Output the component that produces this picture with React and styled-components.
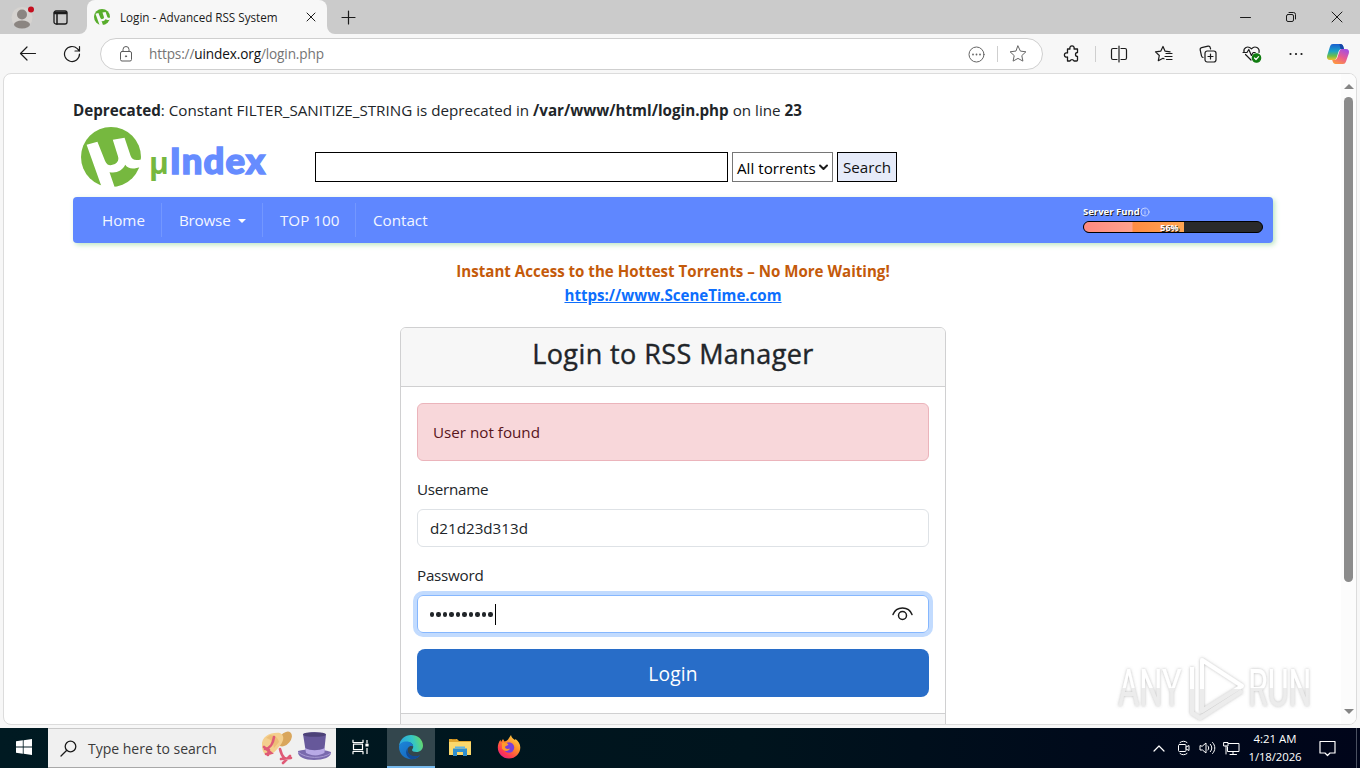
import React from 'react';
import styled, { createGlobalStyle, css } from 'styled-components';

const GlobalStyle = createGlobalStyle`
  * { box-sizing: border-box; }
  body {
    margin: 0;
    overflow: hidden;
    font-family: "Open Sans", "Noto Sans", sans-serif;
    font-size: 15.2px;
    line-height: 24px;
    color: #212529;
  }
`;

const center = css`
  display: flex;
  align-items: center;
  justify-content: center;
`;

const Screen = styled.div`
  width: 1360px;
  height: 768px;
  display: flex;
  flex-direction: column;
  background: #f7f7f7;
  overflow: hidden;
`;

const Text = styled.span`
  white-space: pre;
  letter-spacing: ${p => p.$track || 0}px;
`;

/* window chrome */

const TabBar = styled.div`
  height: 34px;
  flex: none;
  display: flex;
  background: #f7f7f7;
`;

const TabBarStart = styled.div`
  width: 87px;
  display: flex;
  align-items: center;
  padding-left: 11px;
  gap: 19px;
  background: #cbcbcb;
  border-bottom-right-radius: 8px;
`;

const TabHolder = styled.div`
  background: #cbcbcb;
  width: 240px;
`;

const Tab = styled.div`
  height: 34px;
  display: flex;
  align-items: center;
  padding: 0 11px 0 7px;
  background: #f7f7f7;
  border-radius: 8px 8px 0 0;
  font-size: 11.7px;
  color: #1b1b1b;

  ${Text} { margin-left: 10px; flex: 1; }
`;

const TabBarEnd = styled.div`
  flex: 1;
  display: flex;
  justify-content: space-between;
  padding-left: 5px;
  background: #cbcbcb;
  border-bottom-left-radius: 8px;
`;

const WindowButtons = styled.div`
  display: flex;
`;

const Slot = styled.div`
  ${center}
  width: ${p => p.$w || 44}px;
  flex: none;
`;

const Toolbar = styled.div`
  height: 39px;
  flex: none;
  display: flex;
  align-items: center;
  padding: 1px 0 0 6px;
`;

const Address = styled.div`
  width: 943px;
  height: 32px;
  margin: 0 6px;
  display: flex;
  align-items: center;
  background: #fff;
  border: 1px solid #cfcfcf;
  border-radius: 16px;
  padding: 0 4px 0 16px;
  font-size: 13.6px;
  color: #757575;

  ${Text} { margin-left: 14px; flex: 1; }
  b { font-weight: 400; color: #111; }
`;

const Rule = styled.div`
  width: 1px;
  height: 16px;
  background: #cfcfcf;
`;

/* page */

const Page = styled.div`
  flex: 1;
  min-height: 0;
  margin: 0 3px 3px 3px;
  display: flex;
  background: #fff;
  border: 1px solid #dcdcdc;
  border-radius: 8px;
  overflow: hidden;
`;

const Content = styled.div`
  width: 1337px;
  padding: 24px 0 0 69px;
  overflow: hidden;
`;

const Container = styled.div`
  width: 1200px;
`;

const Notice = styled.div`
  height: 24px;
`;

const Header = styled.div`
  height: 75px;
  display: flex;
  align-items: flex-start;
  padding: 5px 0 0 8px;
`;

const Brand = styled.div`
  width: 234px;
  display: flex;
`;

const BrandName = styled.div`
  display: flex;
  align-items: baseline;
  margin: 10px 0 0 8px;
  height: 46px;
  line-height: 46px;
  font-family: Lato, sans-serif;
  font-weight: 900;
  font-size: 36.5px;
  letter-spacing: 1.1px;
  color: #668cff;
  -webkit-text-stroke: 1.5px #668cff;

  i {
    font: 700 30px/46px "Open Sans", sans-serif;
    letter-spacing: 0;
    color: #76b83f;
    -webkit-text-stroke: 0;
    margin-right: 1px;
  }
`;

const SearchForm = styled.div`
  display: flex;
  gap: 4px;
  padding-top: 25px;
  line-height: 28px;
`;

const SearchInput = styled.div`
  width: 413px;
  height: 30px;
  border: 1px solid #000;
`;

const Select = styled.div`
  width: 101px;
  height: 30px;
  border: 1px solid #767676;
  display: flex;
  align-items: center;
  justify-content: space-between;
  padding: 1px 3px 0 4px;
  color: #000;
`;

const SearchButton = styled.div`
  ${center}
  width: 60px;
  height: 30px;
  border: 1px solid #000;
  background: #e6ebf9;
  color: #111;
`;

const Nav = styled.div`
  height: 46px;
  display: flex;
  align-items: center;
  background: #5f87ff;
  border-radius: 4px;
  box-shadow: 2px 2px 5px rgba(110, 200, 120, 0.45);
  padding: 0 10px 0 12px;
`;

const NavItem = styled.div`
  height: 34px;
  display: flex;
  align-items: center;
  width: ${p => p.$w}px;
  padding-left: 17px;
  color: #f3f6ff;
  border-right: ${p => (p.$last ? 0 : '1px solid #7397ff')};
`;

const Caret = styled.span`
  margin-left: 7px;
  margin-top: 2px;
  border: 4px solid transparent;
  border-top-color: #fff;
  border-bottom: 0;
`;

const Fund = styled.div`
  margin-left: auto;
  width: 180px;
  height: 30px;
  color: #fff;
  font-size: 9.5px;
  font-weight: 700;
  line-height: 12px;
  text-shadow: 1px 1px 0 #222;
`;

const FundTitle = styled.div`
  display: flex;
  align-items: center;
  height: 13px;
  margin-bottom: 3px;
`;

const FundTrack = styled.div`
  height: 12px;
  display: flex;
  background: #2a2a2a;
  border: 1px solid #000;
  border-radius: 6px;
  overflow: hidden;
`;

const FundBar = styled.div`
  width: 56%;
  background: linear-gradient(90deg, #ff8a80 0, #ffa28c 48%, #ff8c42 49%, #ffa552 100%);
  text-align: right;
  line-height: 11px;
  padding-right: 5px;
  font-size: 9px;
`;

const Promo = styled.div`
  margin-top: 16px;
  display: flex;
  flex-direction: column;
  align-items: center;
  font-weight: 700;
  font-size: 15.1px;
  color: #c45a0a;

  a { color: #0d6efd; text-decoration: underline; }
`;

const Card = styled.div`
  width: 546px;
  height: 440px;
  margin: 20px 0 0 327px;
  border: 1px solid #d0d0d1;
  border-radius: 6px;
  overflow: hidden;
`;

const CardHeader = styled.div`
  height: 59px;
  display: flex;
  justify-content: center;
  padding-top: 9px;
  background: #f7f7f7;
  border-bottom: 1px solid #d0d0d1;
  font-size: 27px;
  line-height: 34px;
  -webkit-text-stroke: 0.4px #212529;
`;

const CardBody = styled.div`
  display: flex;
  flex-direction: column;
  padding: 16px;
`;

const CardFooter = styled.div`
  height: 60px;
  background: #f7f7f7;
  border-top: 1px solid #d0d0d1;
`;

const Alert = styled.div`
  height: 58px;
  display: flex;
  align-items: center;
  padding-left: 15px;
  background: #f8d7da;
  border: 1px solid #ebb4bb;
  border-radius: 6px;
  color: #58151c;
`;

const Label = styled.div`
  height: 24px;
  margin: 16px 0 8px;
  letter-spacing: -0.25px;

  ${Text} { letter-spacing: inherit; }
`;

const Field = styled.div`
  height: 38px;
  display: flex;
  align-items: center;
  padding: 0 15px 0 12px;
  border: 1px solid ${p => (p.$focus ? '#86b7fe' : '#dee2e6')};
  border-radius: 6px;
  box-shadow: ${p => (p.$focus ? '0 0 0 4px #c2dbfe' : 'none')};
`;

const Dots = styled.div`
  display: flex;
  gap: 2.1px;
  padding-top: 1px;

  i {
    width: 4.4px;
    height: 4.4px;
    border-radius: 50%;
    background: #212529;
  }
`;

const Cursor = styled.div`
  width: 1px;
  height: 21px;
  margin: 0 auto 0 2px;
  background: #000;
`;

const Submit = styled.div`
  ${center}
  height: 48px;
  margin-top: 16px;
  padding-top: 1px;
  background: #286dc8;
  border-radius: 8px;
  color: #fff;
  font-size: 19.2px;
`;

const Scroll = styled.div`
  flex: 1;
  display: flex;
  flex-direction: column;
  align-items: center;
  padding: 10px 0 10px;
  background: #fcfcfc;
`;

const Thumb = styled.div`
  width: 9px;
  height: 485px;
  margin: 8px 0 auto;
  border-radius: 5px;
  background: #8b8b8b;
`;

const Arrow = styled.div`
  border: 5px solid transparent;
  ${p => (p.$up ? 'border-bottom-color' : 'border-top-color')}: #858585;
  ${p => (p.$up ? 'border-top' : 'border-bottom')}: 0;
`;

const Watermark = styled.div`
  position: absolute;
  left: 1114px;
  top: 655px;
  width: 204px;
  height: 68px;
`;

/* taskbar */

const Taskbar = styled.div`
  height: 40px;
  flex: none;
  display: flex;
  background: linear-gradient(90deg, #001a22, #00141d 55%, #000a1b 80%, #00051a);
  color: #fff;
`;

const SearchBox = styled.div`
  width: 288px;
  display: flex;
  align-items: center;
  padding: 1px 4px 0 12px;
  background: #f0f0f0;
  border-top: 1px solid #c9c9c9;
  border-bottom: 1px solid #a8a8a8;
  color: #3b3b3b;
  font-size: 14px;

  ${Text} { margin-left: 11px; flex: 1; }
`;

const TaskButton = styled.div`
  ${center}
  width: ${p => p.$w || 49}px;
  background: ${p => (p.$active ? '#33464d' : 'none')};
  border-bottom: 2px solid ${p => (p.$active ? '#76b9ed' : 'transparent')};
`;

const Tray = styled.div`
  margin-left: auto;
  display: flex;
  align-items: center;
`;

const Clock = styled.div`
  width: 64px;
  display: flex;
  flex-direction: column;
  align-items: center;
  font-size: 11.4px;
  line-height: 18px;
`;

const ShowDesktop = styled.div`
  width: 4px;
  height: 40px;
  margin-left: 8px;
  border-left: 1px solid #4a5060;
`;

const Icon = ({ w = 20, h, box, sw = 1, color = '#1b1b1b', children }) => (
  <svg
    width={w}
    height={h || w}
    viewBox={box || `0 0 ${w} ${h || w}`}
    fill="none"
    stroke={color}
    strokeWidth={sw}
    strokeLinecap="round"
    strokeLinejoin="round"
  >
    {children}
  </svg>
);

const MuLogo = ({ size, color = '#76b83f', back = '#fff' }) => (
  <svg width={size} height={size} viewBox="0 0 61 61">
    <circle cx="30.5" cy="30.5" r="30.5" fill={color} />
    <path
      fill={back}
      d="M5.700 18 16.700 15 24.500 34.500C26 38 28.500 39.500 32 38.500 37 37 39 34 37.500 29.500L32.300 13 44.300 11 50.500 29.500C52 33.500 55 34.500 61.500 33V40C54 43.500 48 43 45 38.500 42 44.500 36 47.500 29 46L34.500 62 21 61Z"
    />
  </svg>
);

const Copilot = () => (
  <svg width="24" height="24" viewBox="0 0 24 24">
    <defs>
      <linearGradient id="cpA" x1="0" y1="0" x2="0" y2="1">
        <stop offset="0" stopColor="#1a5fd0" />
        <stop offset="0.45" stopColor="#1aa3c8" />
        <stop offset="0.75" stopColor="#6cbf4a" />
        <stop offset="1" stopColor="#f2c230" />
      </linearGradient>
      <linearGradient id="cpB" x1="0.7" y1="0" x2="0.2" y2="1">
        <stop offset="0" stopColor="#a64fe0" />
        <stop offset="0.5" stopColor="#ea5c8f" />
        <stop offset="1" stopColor="#ff9a3c" />
      </linearGradient>
    </defs>
    <path d="M7 2h7.500c1.500 0 2.300 1 2.800 2.500L18 7h-2c-2 0-3 1-3.600 3l-1.700 5.500C10 17.500 9 18 7.500 18H4c-2.500 0-3.600-2-2.800-4.500L4 4.500C4.600 2.800 5.500 2 7 2z" fill="url(#cpA)" />
    <path d="M17 22H9.500c-1.500 0-2.300-1-2.800-2.500L6.200 18H8c2 0 3-1 3.600-3l1.700-5.500C14 7.500 15 7 16.500 7H20c2.500 0 3.600 2 2.800 4.500L20 19.500c-.6 1.700-1.500 2.500-3 2.500z" fill="url(#cpB)" />
    <path d="M13.300 2h1.200c1.500 0 2.300 1 2.800 2.500L18 7h-3.500z" fill="#1747a8" />
  </svg>
);

const Edge = () => (
  <svg width="26" height="26" viewBox="0 0 26 26">
    <defs>
      <linearGradient id="edA" x1="0" y1="0.3" x2="1" y2="0.1">
        <stop offset="0" stopColor="#2aa5e0" />
        <stop offset="0.55" stopColor="#35c6c4" />
        <stop offset="1" stopColor="#6fdc5a" />
      </linearGradient>
      <linearGradient id="edB" x1="0" y1="0" x2="1" y2="1">
        <stop offset="0" stopColor="#1c86d8" />
        <stop offset="1" stopColor="#1560b8" />
      </linearGradient>
    </defs>
    <path d="M1 12C1.600 5.500 7 1 13 1c7 0 12 4.700 12 10.500 0 4-2.800 6.500-6.500 6.500-3 0-4.500-1-4.500-2 0-.8 1.200-1.200 1.200-3.200C15.200 10 12.500 8 9 8c-4 0-7 2-8 4z" fill="url(#edA)" />
    <path d="M1 13C1.200 9.500 4.700 7.500 8.500 7.500c4 0 6.500 2.300 6.700 5-4-1.500-6 1.500-5.500 4.500.6 4.500 6.300 7.500 12.300 4.200C20 24 16.800 25.300 13.500 25.300 6.500 25.300 1 20 1 13z" fill="url(#edB)" />
    <path d="M9.700 14c-1.500 6 5 10.500 12.500 7-2 2.800-5 4.300-8.700 4.300C8.500 23.500 6.500 18 9.700 14z" fill="#124a94" />
  </svg>
);

const Explorer = () => (
  <svg width="22" height="20" viewBox="0 0 22 20">
    <path d="M0 2h8l2 2h12v14H0z" fill="#e0a52e" />
    <path d="M0 5h22v13H0z" fill="#fbd86c" />
    <path d="M3 2.500h4" stroke="#c98a1a" />
    <path d="M4 11.500h14V19h-4v-4H8v4H4z" fill="#2f8fcf" />
    <path d="M6 9.500h10v2H6z" fill="#5fb4e6" />
  </svg>
);

const Firefox = () => (
  <svg width="24" height="24" viewBox="0 0 24 24">
    <defs>
      <linearGradient id="ffA" x1="0.9" y1="0" x2="0.2" y2="1">
        <stop offset="0" stopColor="#ffe04a" />
        <stop offset="0.45" stopColor="#ff8a2a" />
        <stop offset="0.8" stopColor="#ff3750" />
        <stop offset="1" stopColor="#e0208a" />
      </linearGradient>
    </defs>
    <path d="M12 23.500C5.500 23.500.8 18.500.8 12.500c0-3 .9-5.500 2.700-7.800L4 7l2-3 1.500 2.500C10 6 11 5 12 3l2-3c.5 2.500 2 3.500 4 5l.5-1C21.500 6 23.300 9 23.300 12.500c0 6-4.800 11-11.300 11z" fill="url(#ffA)" />
    <circle cx="12" cy="12.500" r="5.200" fill="#7a3fd8" />
    <path d="M5 8c3-1 5 0 6.500 1.500-1 1.500-3 1-3.500 2.500 0 2 3 2.500 5 1.500-1 3-6 3.500-8 0z" fill="#ff9a2a" />
  </svg>
);

const Hats = () => (
  <svg width="72" height="36" viewBox="0 0 72 36">
    <ellipse cx="25" cy="8" rx="8.500" ry="5.500" transform="rotate(-50 25 8)" fill="#d9a65c" />
    <path d="M2 15C1 5 11 1 20 2c6 3 3 10-2 15-4 5-9 9-12 7-3-2-4-6-4-9z" fill="#f4cf8e" />
    <path d="M10 4c5 0 8 3 9 7l-5 6C13 11 11 8 6 7z" fill="#edbd76" />
    <path d="M14 6c-1 7-3 11-9 12M4 16l7 6-5 1M9 19l-1 5M20 18c1 5 2 7 5 10M21 28l10-1M23 32l7-7" stroke="#df5a76" strokeWidth="2.600" fill="none" strokeLinecap="round" />
    <path d="M38 20c9-2 24-2 33 1 1 5-8 8-17 8-9 0-17-3-16-9z" fill="#7969ad" />
    <path d="M43 3c7-2.500 17-2.500 23 .5L64 22c-5 3-13 3-18 0z" fill="#66589a" />
    <ellipse cx="54.500" cy="3.500" rx="11.500" ry="2.300" fill="#4d4278" />
    <path d="M45 17c6 3 13 3 20 0l-.6 5c-6 3.500-13 3-18.400 0z" fill="#b8a9e6" />
    <path d="M38 21c8 7 25 7 33 1" stroke="#a99bd4" fill="none" />
  </svg>
);

const Favourite = ({ color, lines }) => (
  <Icon w={lines ? 20 : 18} box={lines ? '0 0 20 20' : '1 1 18 18'} color={color} sw={lines ? 1.2 : 1}>
    {lines
      ? <path d="M9 2.500l2.100 4.700 5 .6M9 2.500L6.700 7.200l-5.200.7 3.800 3.600-1 5.200L9 14.300l1 .5M12 9.500h6M11 12.500H18M12.500 15.500H18" />
      : <path d="M10 2l2.400 5.100 5.500.7-4.100 3.800 1.100 5.500L10 14.400l-4.900 2.700 1.100-5.500L2.100 7.800l5.500-.7z" />}
  </Icon>
);

const Chrome = () => (
  <>
    <TabBar>
      <TabBarStart>
        <svg width="23" height="24" viewBox="0 0 23 24">
          <circle cx="11" cy="12.500" r="10.500" fill="#d6d3d0" />
          <circle cx="11" cy="9.500" r="5" fill="#8b8581" />
          <ellipse cx="11" cy="19.500" rx="8" ry="4" fill="#8b8581" />
          <circle cx="20" cy="4.500" r="3" fill="#c50f1f" />
        </svg>
        <Icon w={15} sw={1.3}>
          <rect x="1" y="1" width="13" height="13" rx="2" />
          <path d="M1.500 2.500h12M1.500 3.500h12M4 4v10" strokeWidth="1.500" />
        </Icon>
      </TabBarStart>
      <TabHolder>
        <Tab>
          <MuLogo size={16} color="#58ad2c" back="#f7f7f7" />
          <Text $track={-0.03}>Login - Advanced RSS System</Text>
          <Icon w={10}><path d="M1 1l8 8M9 1L1 9" /></Icon>
        </Tab>
      </TabHolder>
      <TabBarEnd>
        <Slot $w={33}><Icon w={15} sw={1.2}><path d="M7.500 1v13M1 7.500h13" /></Icon></Slot>
        <WindowButtons>
          <Slot $w={46}><Icon w={11} h={11}><path d="M.5 5.500h10" /></Icon></Slot>
          <Slot $w={46}>
            <Icon w={12}>
              <rect x="1.500" y="3.500" width="7" height="7" rx="1.500" />
              <path d="M4 1.500h4.500a2 2 0 0 1 2 2V8" />
            </Icon>
          </Slot>
          <Slot $w={46}><Icon w={12}><path d="M1 1l10 10M11 1L1 11" /></Icon></Slot>
        </WindowButtons>
      </TabBarEnd>
    </TabBar>
    <Toolbar>
      <Slot><Icon w={18} sw={1.2}><path d="M16.500 8.500H1.500M8 2L1.500 8.500 8 15" /></Icon></Slot>
      <Slot>
        <Icon w={18} sw={1.2}><path d="M16.500 9a7.500 7.500 0 1 1-2.200-5.300L16.500 6M16.500 1.500V6H12" /></Icon>
      </Slot>
      <Address>
        <Icon w={18} color="#5c5c5c">
          <rect x="3.500" y="6.500" width="11" height="9.500" rx="1.500" />
          <path d="M6 6.500V4.500a3 3 0 0 1 6 0v2" />
          <circle cx="9" cy="11.300" r=".6" fill="#5c5c5c" />
        </Icon>
        <Text $track={-0.13}>https://<b>uindex.org</b>/login.php</Text>
        <Slot $w={41}>
          <Icon w={17} color="#666">
            <circle cx="8.500" cy="8.500" r="7.500" />
            <path d="M5 8.500h.01M8.500 8.500h.01M12 8.500h.01" strokeWidth="1.800" />
          </Icon>
        </Slot>
        <Rule />
        <Slot $w={40}><Favourite color="#666" /></Slot>
      </Address>
      <Slot>
        <Icon w={18} sw={1.3} box="-1 0 18 18">
          <path d="M4.500 4H7a2.200 2.200 0 1 1 4 0h3.500v3.500a2 2 0 1 0 0 4V15a1 1 0 0 1-1 1H11a2.200 2.200 0 0 0-4 0H4.500V12a2.200 2.200 0 1 1 0-4z" />
        </Icon>
      </Slot>
      <Slot $w={4}><Rule /></Slot>
      <Slot>
        <Icon w={18} sw={1.2}>
          <path d="M9 1v16M7 3.500H3a1.500 1.500 0 0 0-1.500 1.500v8A1.500 1.500 0 0 0 3 14.500h4M11 3.500h4A1.500 1.500 0 0 1 16.500 5v8a1.500 1.500 0 0 1-1.500 1.500h-4" />
        </Icon>
      </Slot>
      <Slot $w={45}><Favourite lines /></Slot>
      <Slot>
        <Icon w={18} sw={1.2}>
          <rect x="6" y="6" width="11" height="11" rx="2.200" />
          <path d="M11.500 9v5M9 11.500h5M4 12.500a2 2 0 0 1-1.500-1.700L1.200 5a2 2 0 0 1 1.500-2.300L9 1.200A2 2 0 0 1 11.300 2.800L11.600 4" />
        </Icon>
      </Slot>
      <Slot>
        <Icon w={20} sw={1.2}>
          <path d="M9 16L3.500 10.500M2 8c-.8-4 3.500-7 7.500-3.200C13 1 18 4 17 8.500M1 8.500h4l1.800-3 2.600 6 1.800-3h2" />
          <circle cx="14.500" cy="14" r="4.200" fill="#107c10" stroke="#107c10" />
          <path d="M12.500 14l1.500 1.500 2.600-2.800" stroke="#fff" />
        </Icon>
      </Slot>
      <Slot>
        <Icon w={16} h={4} sw={2.2}><path d="M2.500 2h.01M8 2h.01M13.500 2h.01" /></Icon>
      </Slot>
      <Slot $w={40}><Copilot /></Slot>
    </Toolbar>
  </>
);

const LoginCard = () => (
  <Card>
    <CardHeader><Text $track={0.42}>Login to RSS Manager</Text></CardHeader>
    <CardBody>
      <Alert><Text>User not found</Text></Alert>
      <Label><Text>Username</Text></Label>
      <Field><Text>d21d23d313d</Text></Field>
      <Label><Text>Password</Text></Label>
      <Field $focus>
        <Dots>{Array.from({ length: 10 }, (_, i) => <i key={i} />)}</Dots>
        <Cursor />
        <Icon w={22} h={16} sw={1.5}>
          <path d="M2 8.500C3.500 4.500 7 2 11.500 2s8 2.500 9.500 6.500" />
          <circle cx="11.500" cy="9.500" r="4" />
        </Icon>
      </Field>
      <Submit><Text $track={0.15}>Login</Text></Submit>
    </CardBody>
    <CardFooter />
  </Card>
);

const AnyRun = () => (
  <Watermark>
    <svg width="204" height="68" viewBox="-2 0 204 68">
      <defs>
        <filter id="soft" x="-10%" y="-10%" width="120%" height="120%">
          <feDropShadow dx="0" dy="0" stdDeviation="1.6" floodColor="#777" floodOpacity="0.5" />
        </filter>
        <linearGradient id="wm" x1="0" y1="0" x2="0" y2="1">
          <stop offset="0.5" stopColor="#fff" />
          <stop offset="0.5" stopColor="#ececec" />
        </linearGradient>
      </defs>
      <g filter="url(#soft)" fill="url(#wm)" fontFamily="Roboto, sans-serif" fontSize="51">
        <text transform="translate(2 51) scale(0.64 1)">ANY</text>
        <text transform="translate(132 51) scale(0.63 1)">RUN</text>
        <g fill="none" stroke="url(#wm)" strokeWidth="4" strokeLinejoin="round">
          <path d="M86 5v49M86 5l40 26-40 25zM76 12v46l8 5 42-27" />
        </g>
      </g>
    </svg>
  </Watermark>
);

const Bottom = () => (
  <Taskbar>
    <TaskButton $w={48}>
      <svg width="16" height="16" viewBox="0 0 16 16" fill="#fff">
        <path d="M0 2.300L6.800 1.300v6.300H0zM7.600 1.200L16 0v7.600H7.600zM0 8.400h6.800v6.300L0 13.700zM7.600 8.400H16V16l-8.400-1.200z" />
      </svg>
    </TaskButton>
    <SearchBox>
      <Icon w={17} sw={1.3}><circle cx="10.500" cy="6.500" r="5.300" /><path d="M6.800 10.300L1 16" /></Icon>
      <Text>Type here to search</Text>
      <Hats />
    </SearchBox>
    <TaskButton $w={51}>
      <Icon w={19} h={16} color="#fff" sw={1.2}>
        <path d="M1 .8v2.700h10V.8M1 15.200v-2.700h10v2.700M1.500 5.200h9v5.500h-9zM15 1v3M15 9v6" strokeLinecap="butt" />
        <rect x="14" y="5" width="2" height="2" fill="#fff" />
      </Icon>
    </TaskButton>
    <TaskButton $w={48} $active><Edge /></TaskButton>
    <TaskButton><Explorer /></TaskButton>
    <TaskButton><Firefox /></TaskButton>
    <Tray>
      <Slot $w={24}><Icon w={12} h={7} color="#fff" sw={1.2}><path d="M1 6l5-5 5 5" /></Icon></Slot>
      <Slot $w={24}>
        <Icon w={13} h={16} color="#fff">
          <rect x="1.500" y="4.500" width="7.500" height="7" rx="1" />
          <path d="M9 7l3-1.500v5L9 9M3 2.500C5 .8 8 .8 10 2.500M3 13.500c2 1.700 5 1.700 7 0" />
        </Icon>
      </Slot>
      <Slot $w={24}>
        <Icon w={17} h={14} color="#fff">
          <path d="M1 5v4h2.500L7 12V2L3.500 5zM9 5c1 1.200 1 2.800 0 4M11.300 3.300c2 2.200 2 5.200 0 7.400M13.600 1.500c3 3.200 3 7.800 0 11" />
        </Icon>
      </Slot>
      <Slot $w={24}>
        <Icon w={17} h={15} color="#fff">
          <path d="M5.500 2.500h10.500v8H4.500V6M10 10.500v3M7 13.500h6.500M1 1.500h4v3.500H1zM3 5v8" />
        </Icon>
      </Slot>
      <Clock>
        <Text>4:21 AM</Text>
        <Text $track={-0.1}>1/18/2026</Text>
      </Clock>
      <Slot $w={41}>
        <Icon w={17} h={17} color="#fff" sw={1.2}><path d="M1 1.500h15v11.500h-5l-2.500 2.500L6 13H1z" /></Icon>
      </Slot>
      <ShowDesktop />
    </Tray>
  </Taskbar>
);

export default function App() {
  return (
    <Screen>
      <GlobalStyle />
      <Chrome />
      <Page>
        <Content>
          <Container>
            <Notice>
              <Text>
                <b>Deprecated</b>: Constant FILTER_SANITIZE_STRING is deprecated in <b>/var/www/html/login.php</b> on line <b>23</b>
              </Text>
            </Notice>
            <Header>
              <Brand>
                <MuLogo size={60} />
                <BrandName><i>µ</i>Index</BrandName>
              </Brand>
              <SearchForm>
                <SearchInput />
                <Select>
                  <Text>All torrents</Text>
                  <Icon w={11} h={8} sw={2}><path d="M2 1.500L5.500 5 9 1.500" /></Icon>
                </Select>
                <SearchButton><Text>Search</Text></SearchButton>
              </SearchForm>
            </Header>
            <Nav>
              <NavItem $w={77}><Text>Home</Text></NavItem>
              <NavItem $w={101}><Text $track={-0.2}>Browse</Text><Caret /></NavItem>
              <NavItem $w={93}><Text>TOP 100</Text></NavItem>
              <NavItem $w={90} $last><Text>Contact</Text></NavItem>
              <Fund>
                <FundTitle>
                  <Text>Server Fund</Text>
                  <Icon w={10} color="#c3d2ff">
                    <circle cx="5" cy="5" r="4" />
                    <path d="M5 4.500v2.500M5 3h.01" />
                  </Icon>
                </FundTitle>
                <FundTrack><FundBar>56%</FundBar></FundTrack>
              </Fund>
            </Nav>
            <Promo>
              <Text>Instant Access to the Hottest Torrents – No More Waiting!</Text>
              <a><Text>https://www.SceneTime.com</Text></a>
            </Promo>
            <LoginCard />
          </Container>
        </Content>
        <Scroll>
          <Arrow $up />
          <Thumb />
          <Arrow />
        </Scroll>
      </Page>
      <Bottom />
      <AnyRun />
    </Screen>
  );
}
